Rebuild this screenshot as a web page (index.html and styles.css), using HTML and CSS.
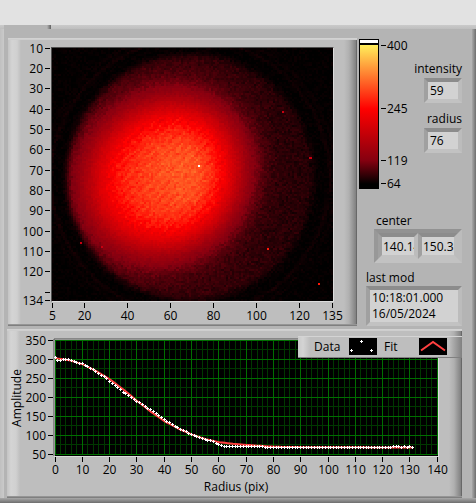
FILE: index.html
```html
<!DOCTYPE html>
<html lang="en">

<head>
    <meta charset="utf-8">
    <title>Beam profile</title>
    <link rel="stylesheet" href="styles.css">
</head>

<body>
  <div class="strip"></div>

  <main class="panel">
    <div class="notch"></div>

    <div class="top">
      <section class="frame image-frame">
        <svg class="axis y-axis" id="imageY" viewBox="0 0 43 255"></svg>
        <canvas class="beam" id="beam" width="131" height="125"></canvas>
        <svg class="axis x-axis" id="imageX" viewBox="0 0 283 24"></svg>
      </section>

      <section class="side">
        <div class="readings">
          <svg class="axis ramp" viewBox="0 0 50 151" width="50" height="151">
            <defs>
              <linearGradient id="heat" x1="0" y1="0" x2="0" y2="1">
                <stop offset="0" stop-color="#ffee5a"/>
                <stop offset="0.46" stop-color="#ff0000"/>
                <stop offset="0.83" stop-color="#850010"/>
                <stop offset="1" stop-color="#000000"/>
              </linearGradient>
            </defs>
            <rect width="20" height="150" fill="#000"/>
            <rect x="1" y="1" width="18" height="3" fill="#fff"/>
            <rect x="1" y="6" width="18" height="139" fill="url(#heat)"/>
            <path class="tick" d="M22 6.5h5M22 69.5h5M22 121.5h5M22 144.5h5"/>
            <text x="28" y="11">400</text>
            <text x="28" y="74">245</text>
            <text x="28" y="126">119</text>
            <text x="28" y="149">64</text>
          </svg>

          <div class="values">
            <label for="intensity">intensity</label>
            <input type="text" class="sunken small" id="intensity" value="59" readonly>
            <label for="radius">radius</label>
            <input type="text" class="sunken small" id="radius" value="76" readonly>
          </div>
        </div>

        <div class="center">
          <label for="centerX">center</label>
          <div class="cluster">
            <input type="text" class="sunken" id="centerX" value="140.14" readonly>
            <input type="text" class="sunken" id="centerY" value="150.3" aria-label="center y" readonly>
          </div>
        </div>

        <div class="modified">
          <label for="lastMod">last mod</label>
          <textarea class="sunken" id="lastMod" rows="2" readonly>10:18:01.000
16/05/2024</textarea>
        </div>
      </section>
    </div>

    <section class="frame graph-frame">
      <svg class="axis graph" id="graph" viewBox="0 0 455 169"></svg>
      <div class="legend">
        <span>Data</span>
        <svg width="28" height="17" viewBox="0 0 28 17">
          <rect width="28" height="17" fill="#000"/>
          <path class="mark" d="M11 3.5h3M12.5 2v3M1 12.5h3M2.5 11v3M21 12.5h3M22.5 11v3"/>
        </svg>
        <span>Fit</span>
        <svg width="28" height="17" viewBox="0 0 28 17">
          <rect width="28" height="17" fill="#000"/>
          <path class="fit" d="M2 12.5L14 4L26 12.5"/>
        </svg>
      </div>
    </section>
  </main>

  <script src="script.js"></script>
</body>
</html>
```

FILE: styles.css
```css
body {
  margin: 0;
  background-color: #b4b4b4;
  font-family: "Open Sans", "Noto Sans", sans-serif;
  font-size: 12px;
  line-height: 16px;
  color: #000;
}

.strip {
  height: 25px;
  background-color: #e2e2e2;
}

.panel {
  position: relative;
  padding: 13px 14px 5px 7px;
  background:
    linear-gradient(#cacaca, #bebebe) top / 100% 4px no-repeat,
    linear-gradient(#a8a8a8, #6e6e6e) bottom / 100% 5px no-repeat,
    linear-gradient(to right, #c0c0c0, #cacaca) left / 4px 100% no-repeat,
    linear-gradient(to right, #a8a8a8, #6e6e6e) right / 4px 100% no-repeat,
    #b4b4b4;
}

.notch {
  position: absolute;
  top: 0;
  left: 4px;
  width: 47px;
  height: 4px;
  background: linear-gradient(to right, #b4b4b4 43px, #606060);
}

.top {
  display: flex;
  gap: 2px;
  padding-left: 1px;
  margin-bottom: 3px;
}

.frame {
  background:
    linear-gradient(#d4d4d4, #cccccc) top / 100% 2px no-repeat,
    linear-gradient(#a0a0a0, #747474) bottom / 100% 2px no-repeat,
    linear-gradient(to right, #c4c4c4, #d4d4d4 4px, #d0d0d0 9px, #bebebe) left / 13px 100% no-repeat,
    linear-gradient(to right, #bebebe, #b0b0b0 5px, #808080 12px, #505050) right / 13px 100% no-repeat,
    #bebebe;
}

.image-frame {
  flex: 1;
  display: grid;
  grid-template-columns: 43px 1fr 23px;
  grid-template-rows: 9px auto 24px;
}

.axis {
  display: block;
  overflow: visible;
}

.axis text {
  font-size: 12px;
}

.y-axis {
  grid-area: 2 / 1;
  width: 100%;
  height: 100%;
}

.x-axis {
  grid-area: 3 / 2;
  width: 100%;
}

.beam {
  grid-area: 2 / 2;
  display: block;
  box-sizing: border-box;
  width: 100%;
  aspect-ratio: 283 / 255;
  border: 1px solid;
  border-color: #505050 #dcdcdc #dcdcdc #505050;
  background-color: #000;
  image-rendering: pixelated;
}

.tick {
  stroke: #000;
  fill: none;
}

.end {
  text-anchor: end;
}

.middle {
  text-anchor: middle;
}

.side {
  width: 103px;
  padding-top: 1px;
  display: flex;
  flex-direction: column;
}

.readings {
  display: flex;
  justify-content: space-between;
  height: 174px;
}

.values {
  width: 48px;
  padding-top: 22px;
  display: flex;
  flex-direction: column;
  align-items: flex-end;
}

.ramp {
  flex: none;
}

label {
  display: block;
}

input,
textarea {
  box-sizing: border-box;
  margin: 0;
  padding: 0 2px;
  border-radius: 0;
  background-color: #d2d2d2;
  color: #000;
  font: inherit;
  outline: none;
}

.sunken {
  border: 4px solid;
  border-color: #8c8c8c #bcbcbc #c2c2c2 #a0a0a0;
}

.small {
  width: 38px;
  height: 25px;
  margin: 1px 0 8px;
}

.center {
  padding-left: 15px;
}

.center label {
  padding-left: 2px;
}

.cluster {
  display: flex;
  border: 4px solid;
  border-color: #929292 #bcbcbc #c2c2c2 #989898;
}

.cluster input {
  flex: 1;
  min-width: 0;
  height: 26px;
  padding: 0 0 0 1px;
}

.modified {
  padding-left: 7px;
  margin-top: 7px;
}

.modified textarea {
  display: block;
  width: 100%;
  height: 40px;
  resize: none;
  overflow: hidden;
}

.graph-frame {
  position: relative;
}

.graph {
  width: 100%;
}

.major {
  stroke: #006e00;
}

.minor {
  stroke: #003800;
}

.fit {
  stroke: #ff4040;
  stroke-width: 2;
  fill: none;
}

.mark {
  stroke: #fff;
  fill: none;
}

.legend {
  position: absolute;
  top: 7px;
  right: 0;
  box-sizing: border-box;
  width: 164px;
  height: 22px;
  padding: 2px 15px 3px 16px;
  display: grid;
  grid-template-columns: 35px 35px 1fr 28px;
  align-items: center;
  background:
    linear-gradient(#d4d4d4, #d4d4d4) top / 100% 1px no-repeat,
    linear-gradient(#808080, #808080) bottom / 100% 1px no-repeat,
    linear-gradient(to right, #cacaca, #d4d4d4 5px, #bebebe) left / 12px 100% no-repeat,
    linear-gradient(to right, #bebebe, #808080) right / 13px 100% no-repeat,
    #bebebe;
}
```

FILE: script.js
```js
var imageY = document.getElementById("imageY");
var imageX = document.getElementById("imageX");
var graph = document.getElementById("graph");

function text(x, y, value, cls) {
  return `<text x="${x}" y="${y}" class="${cls}">${value}</text>`;
}

// image axes
var out = "";
[10, 20, 30, 40, 50, 60, 70, 80, 90, 100, 110, 120, 130, 134].forEach(function (v) {
  var y = Math.floor(1 + (v - 10) * 2.035) + 0.5;
  out += `<path class="tick" d="M37 ${y}h5"/>`;
  if (v != 130) out += text(35, y + 4.5, v, "end");
});
imageY.innerHTML = out;

out = "";
[5, 20, 40, 60, 80, 100, 120, 135].forEach(function (v) {
  var x = Math.floor(1 + (v - 5) * 2.155) + 0.5;
  out += `<path class="tick" d="M${x} 1v5"/>` + text(x, 18, v, "middle");
});
imageX.innerHTML = out;

// false colour scale
var stops = [
  [64, 0, 0, 0],
  [119, 133, 0, 16],
  [245, 255, 0, 0],
  [400, 255, 238, 90]
];

function colour(v) {
  v = Math.max(64, Math.min(400, v));
  for (var i = 1; i < stops.length; i++) {
    var a = stops[i - 1], b = stops[i];
    if (v <= b[0]) {
      var t = (v - a[0]) / (b[0] - a[0]);
      return [a[1] + (b[1] - a[1]) * t, a[2] + (b[2] - a[2]) * t, a[3] + (b[3] - a[3]) * t];
    }
  }
}

var seed = 7;
function random() {
  seed = (seed * 16807) % 2147483647;
  return seed / 2147483647;
}

function drawBeam() {
  var ctx = document.getElementById("beam").getContext("2d");
  var img = ctx.createImageData(131, 125);
  for (var j = 0; j < 125; j++) {
    for (var i = 0; i < 131; i++) {
      var r = Math.hypot(i - 64, (j - 63.5) * 0.95);
      // beam leans from lower left to upper right
      var a = (i - 52 - (j - 63) * 0.95) * 0.707;
      var b = (i - 52 + (j - 63) * 0.95) * 0.707;
      var d = Math.hypot(a * 0.95, b * 1.04);
      var p = Math.hypot(i - 64, (j - 62) * 0.7);
      var noise = random() + random() - 1;
      // soft aperture edge
      var edge = 1 / (1 + Math.exp((r - 57.5) / 0.9));
      var floor = 90 - 0.12 * (i - 30);
      var v = floor + 183 * Math.exp(-Math.pow(d / 36, 4)) + 34 * Math.exp(-p * p / 460);
      v += noise * (v > 225 ? 17 : 10) + (v > 225 ? 6 * Math.sin((i + j) * 1.3) : 0);
      var outside = 65 + 5 * noise;
      outside += 6 * Math.exp(-Math.pow((r - 65) / 0.9, 2)) + 3 * Math.exp(-Math.pow((r - 68) / 0.9, 2));
      var c = colour(v * edge + outside * (1 - edge));
      img.data.set([c[0], c[1], c[2], 255], (j * 131 + i) * 4);
    }
  }
  ctx.putImageData(img, 0, 0);

  // hot pixels
  ctx.fillStyle = "#c80010";
  [[107, 31], [120, 54], [13, 96], [23, 98]].forEach(function (h) {
    ctx.fillRect(h[0], h[1], 1, 1);
  });
  ctx.fillStyle = "#ff1808";
  ctx.fillRect(100, 99, 1, 1);
  ctx.fillRect(124, 116, 1, 1);
  ctx.fillStyle = "#fff";
  ctx.fillRect(68, 58, 1, 1);
}
drawBeam();

// radial profile
var fit = [[0, 302], [5, 297], [10, 286], [15, 268], [20, 246], [25, 219], [30, 189], [35, 161], [40, 136],
  [45, 117], [50, 101], [55, 89], [60, 81], [65, 77], [70, 74], [80, 69], [90, 68], [131, 67]];
var data = [[0, 304], [1, 296], [2, 295], [3, 298], [5, 300], [8, 290], [10, 287], [15, 268], [17, 256], [18, 255], [20, 242],
  [25, 213], [30, 189], [35, 166], [40, 141], [45, 119], [50, 101], [55, 89], [58, 82], [62, 69], [65, 71],
  [74, 70], [78, 67], [123, 67], [125, 70], [127, 67], [128, 70], [129, 67], [130, 69], [131, 67]];

function at(list, x) {
  if (x <= list[0][0]) return list[0][1];
  for (var i = 1; i < list.length; i++) {
    if (x <= list[i][0]) {
      var a = list[i - 1], b = list[i];
      return a[1] + (b[1] - a[1]) * (x - a[0]) / (b[0] - a[0]);
    }
  }
}

function px(x) { return Math.floor(48 + x * 2.73) + 0.5; }
function py(v) { return Math.floor(125 - (v - 50) * 0.38) + 0.5; }

function drawGraph() {
  var minor = "", major = "", ticks = "", labels = "", marks = "", line = "";
  for (var x = 0; x <= 140; x += 2) {
    if (x % 10) {
      minor += `M${px(x)} 11V126`;
    } else {
      major += `M${px(x)} 11V126`;
      ticks += `M${px(x)} 128v5`;
      labels += text(px(x), 145, x, "middle");
    }
  }
  for (var v = 50; v <= 350; v += 25) {
    if (v % 50) {
      minor += `M48 ${py(v)}H430`;
    } else {
      major += `M48 ${py(v)}H430`;
      ticks += `M41 ${py(v)}h5`;
      labels += text(39, py(v) + 4.5, v, "end");
    }
  }
  for (var i = 0; i <= 131; i++) {
    line += (i ? "L" : "M") + (48.5 + i * 2.73) + " " + (125 - (at(fit, i) - 50) * 0.38);
    marks += `M${px(i) - 1.5} ${py(at(data, i))}h3m-1.5 -1.5v3`;
  }
  graph.innerHTML = `<rect x="47" y="10" width="385" height="118" fill="#dcdcdc"/>
    <path d="M47 127V10H432" stroke="#505050" fill="none"/>
    <rect x="48" y="11" width="383" height="116" fill="#000"/>
    <path class="minor" d="${minor}"/><path class="major" d="${major}"/>
    <path class="tick" d="${ticks}"/>${labels}
    <path class="fit" d="${line}"/><path class="mark" d="${marks}"/>
    <text class="middle" transform="translate(14 69) rotate(-90)">Amplitude</text>
    <text x="229" y="162" class="middle">Radius (pix)</text>`;
}
drawGraph();
```
